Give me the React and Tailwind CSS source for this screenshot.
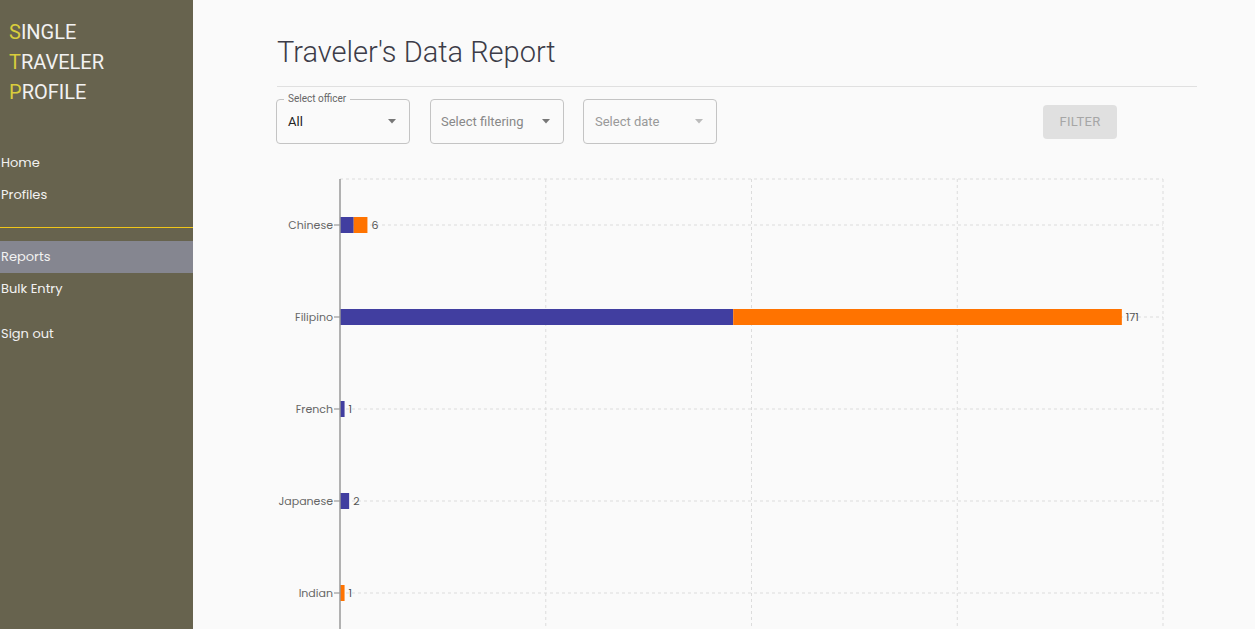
import React from "react";

const navFont = { fontFamily: "Poppins, 'Open Sans', 'Liberation Sans', sans-serif" };

const rows = [
    { name: "Chinese", a: 3, b: 3 },
    { name: "Filipino", a: 86, b: 85 },
    { name: "French", a: 1, b: 0 },
    { name: "Japanese", a: 2, b: 0 },
    { name: "Indian", a: 0, b: 1 },
];

const Arrow = ({ color }) => (
    <svg width="10" height="5" viewBox="0 0 10 5"><path d="M1 0l4 4.5 4-4.5z" fill={color} /></svg>
);

const Chart = () => {
    const x0 = 63;
    const x1 = 886;
    const top = 19;
    const band = 92;
    const k = (x1 - x0) / 180;
    const verticals = [45, 90, 135, 180].map(v => x0 + v * k);
    return (
        <svg width="920" height="490" className="block" style={navFont}>
            <line x1={x0} y1={top} x2={x1} y2={top} stroke="#dcdcdc" strokeDasharray="3 3" />
            {rows.map((r, i) => {
                const cy = top + band / 2 + i * band;
                return <line key={r.name} x1={x0} y1={cy} x2={x1} y2={cy} stroke="#dcdcdc" strokeDasharray="3 3" />;
            })}
            {verticals.map(x => (
                <line key={x} x1={x} y1={top} x2={x} y2={490} stroke="#dcdcdc" strokeDasharray="3 3" />
            ))}
            {rows.map((r, i) => {
                const cy = top + band / 2 + i * band;
                const wa = r.a * k;
                const wb = r.b * k;
                return (
                    <g key={r.name}>
                        <rect x={x0} y={cy - 8} width={wa} height={16} fill="#413ea0" />
                        <rect x={x0 + wa} y={cy - 8} width={wb} height={16} fill="#ff7300" />
                        <line x1={x0 - 6} y1={cy} x2={x0} y2={cy} stroke="#888" />
                        <text x={x0 - 7} y={cy + 4} textAnchor="end" fontSize="11" fill="#666">{r.name}</text>
                        <text x={x0 + wa + wb + 4} y={cy + 4} fontSize="11" fill="#555">{r.a + r.b}</text>
                    </g>
                );
            })}
            <line x1={x0} y1={top} x2={x0} y2={490} stroke="#999" strokeWidth="1.5" />
        </svg>
    );
};

const App = () => {
    return (
        <div className="flex h-screen w-full overflow-hidden bg-[#fafafa]">
            <aside className="w-[193px] shrink-0 bg-[#67634e] text-[#f2f2f2]">
                <div className="pt-[17px] pl-[9px] text-[20px] leading-[30px]" style={{ fontFamily: "Roboto, 'Liberation Sans', sans-serif" }}>
                    <div><span className="text-[#d9cd3c]">S</span>INGLE</div>
                    <div><span className="text-[#d9cd3c]">T</span>RAVELER</div>
                    <div><span className="text-[#d9cd3c]">P</span>ROFILE</div>
                </div>
                <nav className="mt-[40px] text-[13px]" style={navFont}>
                    <div className="h-8 flex items-center pl-px">Home</div>
                    <div className="h-8 flex items-center pl-px">Profiles</div>
                    <div className="mt-[16px] h-px bg-[#f0c619]" />
                    <div className="mt-[13px] h-8 flex items-center pl-px bg-[#858690]">Reports</div>
                    <div className="h-8 flex items-center pl-px">Bulk Entry</div>
                    <div className="mt-[13px] h-8 flex items-center pl-px">Sign out</div>
                </nav>
            </aside>
            <main className="flex-1 pl-[84px]" style={{ fontFamily: "Roboto, 'Liberation Sans', sans-serif" }}>
                <div className="w-[920px]">
                    <h1 className="pt-[34px] text-[29px] leading-[36px] font-light text-[#3c3c48]">Traveler's Data Report</h1>
                    <div className="mt-4 h-px bg-[#e0e0e0]" />
                    <div className="mt-[12px] -ml-px flex items-start">
                        <div className="relative w-[134px] h-[45px] rounded border border-[#c4c4c4] flex items-center justify-between pl-[11px] pr-3">
                            <span className="absolute -top-[7px] left-[7px] px-1 bg-[#fafafa] text-[10px] leading-3 text-[#666]">Select officer</span>
                            <span className="text-[13px] text-[#222]">All</span>
                            <Arrow color="#777" />
                        </div>
                        <div className="ml-[20px] w-[134px] h-[45px] rounded border border-[#c4c4c4] flex items-center justify-between pl-[10px] pr-3">
                            <span className="text-[13px] text-[#888]">Select filtering</span>
                            <Arrow color="#777" />
                        </div>
                        <div className="ml-[19px] w-[134px] h-[45px] rounded border border-[#c4c4c4] flex items-center justify-between pl-[11px] pr-3">
                            <span className="text-[13px] text-[#999]">Select date</span>
                            <Arrow color="#bbb" />
                        </div>
                        <button className="ml-[326px] mt-[6px] w-[74px] h-[34px] rounded bg-[#e0e0e0] text-[13px] text-[#a6a6a6] tracking-wide">FILTER</button>
                    </div>
                    <div className="mt-[16px]">
                        <Chart />
                    </div>
                </div>
            </main>
        </div>
    );
};

export default App;
